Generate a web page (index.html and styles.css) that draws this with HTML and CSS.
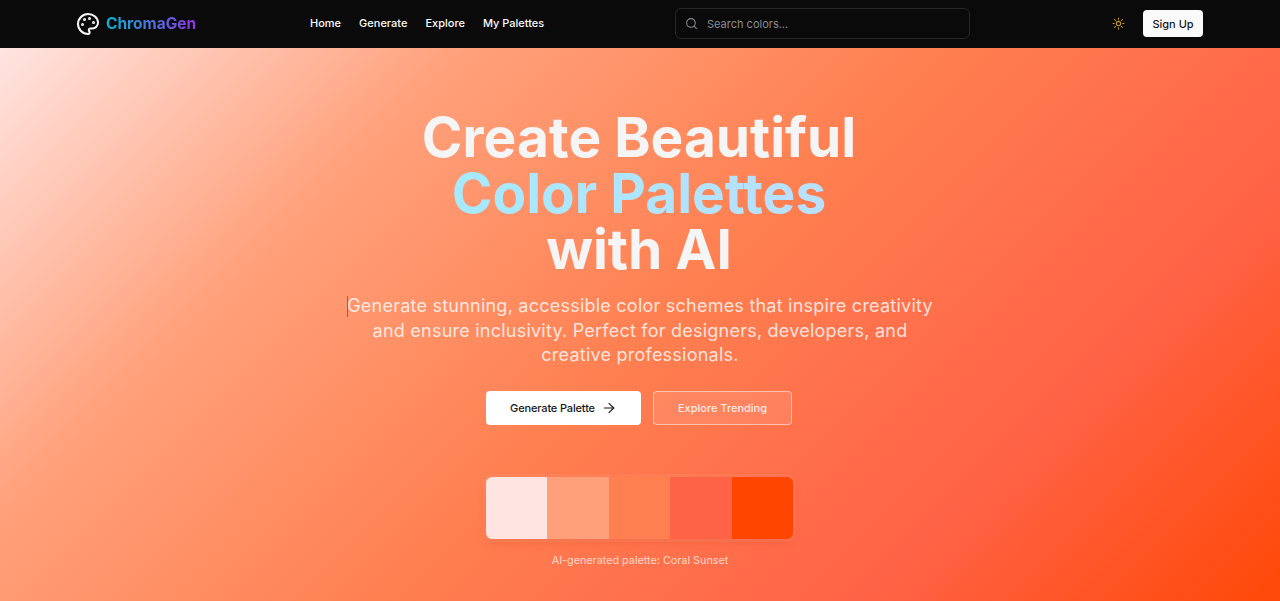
FILE: index.html
```html
<!DOCTYPE html>
<html lang="en">
<head>
    <meta charset="UTF-8">
    <title>ChromaGen</title>
    <link rel="stylesheet" href="styles.css">
</head>

<body>
    <header class="navbar">
        <a class="brand" href="#">
            <svg class="brand-icon" viewBox="0 0 24 24" fill="none" stroke="currentColor" stroke-width="2" stroke-linecap="round" stroke-linejoin="round">
                <circle cx="13.5" cy="6.5" r=".5" fill="currentColor"></circle>
                <circle cx="17.5" cy="10.5" r=".5" fill="currentColor"></circle>
                <circle cx="8.5" cy="7.5" r=".5" fill="currentColor"></circle>
                <circle cx="6.5" cy="12.5" r=".5" fill="currentColor"></circle>
                <path d="M12 2C6.5 2 2 6.5 2 12s4.5 10 10 10c.926 0 1.648-.746 1.648-1.688 0-.437-.18-.835-.437-1.125-.29-.289-.438-.652-.438-1.125a1.64 1.64 0 0 1 1.668-1.668h1.996c3.051 0 5.555-2.503 5.555-5.554C21.965 6.012 17.461 2 12 2z"></path>
            </svg>
            <span class="brand-name">ChromaGen</span>
        </a>

        <nav class="nav-links">
            <a href="#">Home</a>
            <a href="#">Generate</a>
            <a href="#">Explore</a>
            <a href="#">My Palettes</a>
        </nav>

        <div class="search-box">
            <svg class="search-icon" viewBox="0 0 24 24" fill="none" stroke="currentColor" stroke-width="2" stroke-linecap="round" stroke-linejoin="round">
                <circle cx="11" cy="11" r="8"></circle>
                <path d="m21 21-4.3-4.3"></path>
            </svg>
            <span class="search-text">Search colors...</span>
        </div>

        <div class="nav-actions">
            <svg class="sun-icon" viewBox="0 0 24 24" fill="none" stroke="currentColor" stroke-width="2" stroke-linecap="round" stroke-linejoin="round">
                <circle cx="12" cy="12" r="4"></circle>
                <path d="M12 2v2M12 20v2M4.93 4.93l1.41 1.41M17.66 17.66l1.41 1.41M2 12h2M20 12h2M6.34 17.66l-1.41 1.41M19.07 4.93l-1.41 1.41"></path>
            </svg>
            <button class="signup">Sign Up</button>
        </div>
    </header>

    <main class="hero">
        <h1 class="hero-title">
            Create Beautiful<br>
            <span class="hero-accent">Color Palettes</span><br>
            with AI
        </h1>

        <p class="hero-text"><span class="caret"></span>Generate stunning, accessible color schemes that inspire creativity and ensure inclusivity. Perfect for designers, developers, and creative professionals.</p>

        <div class="hero-buttons">
            <button class="btn btn-primary">
                Generate Palette
                <svg class="btn-arrow" viewBox="0 0 24 24" fill="none" stroke="currentColor" stroke-width="2" stroke-linecap="round" stroke-linejoin="round">
                    <path d="M5 12h14"></path>
                    <path d="m12 5 7 7-7 7"></path>
                </svg>
            </button>
            <button class="btn btn-outline">Explore Trending</button>
        </div>

        <div class="palette">
            <div class="swatch swatch-1"></div>
            <div class="swatch swatch-2"></div>
            <div class="swatch swatch-3"></div>
            <div class="swatch swatch-4"></div>
            <div class="swatch swatch-5"></div>
        </div>
        <p class="palette-label">AI-generated palette: Coral Sunset</p>
    </main>
</body>
</html>
```

FILE: styles.css
```css
* {
    box-sizing: border-box;
}

html, body {
    height: 100%;
}

body {
    margin: 0;
    font-family: Inter, "Liberation Sans", sans-serif;
    background-color: #0a0a0a;
    overflow: hidden;
}

a {
    text-decoration: none;
    color: inherit;
}

button {
    font-family: inherit;
    cursor: pointer;
}

.navbar {
    height: 48px;
    display: flex;
    align-items: center;
    padding: 0 77px 1px 76px;
    background-color: #0a0a0a;
    color: #fafafa;
}

.brand {
    width: 234px;
    display: flex;
    align-items: center;
    gap: 6px;
}

.brand-icon {
    width: 24px;
    height: 24px;
}

.brand-name {
    font-size: 15.5px;
    font-weight: 700;
    background: linear-gradient(90deg, #06b6d4, #9333ea);
    -webkit-background-clip: text;
    background-clip: text;
    color: transparent;
}

.nav-links {
    width: 365px;
    display: flex;
    gap: 18px;
    margin-top: -1px;
    font-size: 11px;
    font-weight: 450;
}

.search-box {
    width: 295px;
    height: 31px;
    display: flex;
    align-items: center;
    padding-left: 9px;
    gap: 9px;
    border: 1px solid #27272a;
    border-radius: 6px;
    color: #8b8b93;
    font-size: 11px;
}

.search-icon {
    width: 13px;
    height: 13px;
}

.nav-actions {
    margin-left: auto;
    display: flex;
    align-items: center;
    gap: 18px;
}

.sun-icon {
    width: 13px;
    height: 13px;
    color: #c99a1a;
}

.signup {
    width: 60px;
    height: 27px;
    padding: 0;
    border: none;
    border-radius: 4px;
    background-color: #fafafa;
    color: #18181b;
    font-size: 11px;
    font-weight: 450;
}

.hero {
    height: 553px;
    display: flex;
    flex-direction: column;
    align-items: center;
    padding-top: 61px;
    background: linear-gradient(135deg, #ffe4e1 0%, #ffa07a 25%, #ff7f50 50%, #ff6347 75%, #ff4500 100%);
    background-size: 100% 600px;
    text-align: center;
}

.hero-title {
    margin: 0 2px 0 0;
    font-size: 55px;
    line-height: 56px;
    font-weight: 700;
    color: #f5f5f6;
}

.hero-accent {
    background: linear-gradient(90deg, #a5eaff, #b9e0ff);
    -webkit-background-clip: text;
    background-clip: text;
    color: transparent;
}

.hero-text {
    width: 600px;
    margin: 17px 0 0;
    font-size: 18px;
    line-height: 24.5px;
    font-weight: 400;
    letter-spacing: 0.23px;
    color: rgba(255, 255, 255, 0.8);
}

.caret {
    display: inline-block;
    width: 1px;
    height: 21px;
    margin-right: -1px;
    vertical-align: -5px;
    background-color: rgba(90, 80, 80, 0.7);
}

.hero-buttons {
    display: flex;
    gap: 12px;
    margin-top: 23px;
    margin-right: 2px;
}

.btn {
    height: 34px;
    display: flex;
    align-items: center;
    justify-content: center;
    padding: 0;
    border-radius: 4px;
    font-size: 11px;
    font-weight: 500;
}

.btn-primary {
    width: 155px;
    gap: 6px;
    border: none;
    background-color: #fff;
    color: #18181b;
    letter-spacing: -0.15px;
}

.btn-arrow {
    width: 16px;
    height: 16px;
    stroke-width: 1.7;
}

.btn-outline {
    width: 139px;
    border: 1px solid rgba(255, 255, 255, 0.5);
    background-color: rgba(255, 255, 255, 0.1);
    color: rgba(255, 255, 255, 0.85);
}

.palette {
    width: 307px;
    height: 62px;
    display: flex;
    margin-top: 52px;
    margin-right: 1px;
    border-radius: 6px;
    overflow: hidden;
    box-shadow: 0 0 0 3px rgba(255, 255, 255, 0.06), 0 4px 10px rgba(200, 60, 20, 0.2);
}

.swatch {
    flex: 1;
}

.swatch-1 { background-color: #ffe4e1; }
.swatch-2 { background-color: #ffa07a; }
.swatch-3 { background-color: #ff7f50; }
.swatch-4 { background-color: #ff6347; }
.swatch-5 { background-color: #ff4500; }

.palette-label {
    margin: 15px 0 0;
    font-size: 10.8px;
    color: rgba(255, 255, 255, 0.72);
}
```
